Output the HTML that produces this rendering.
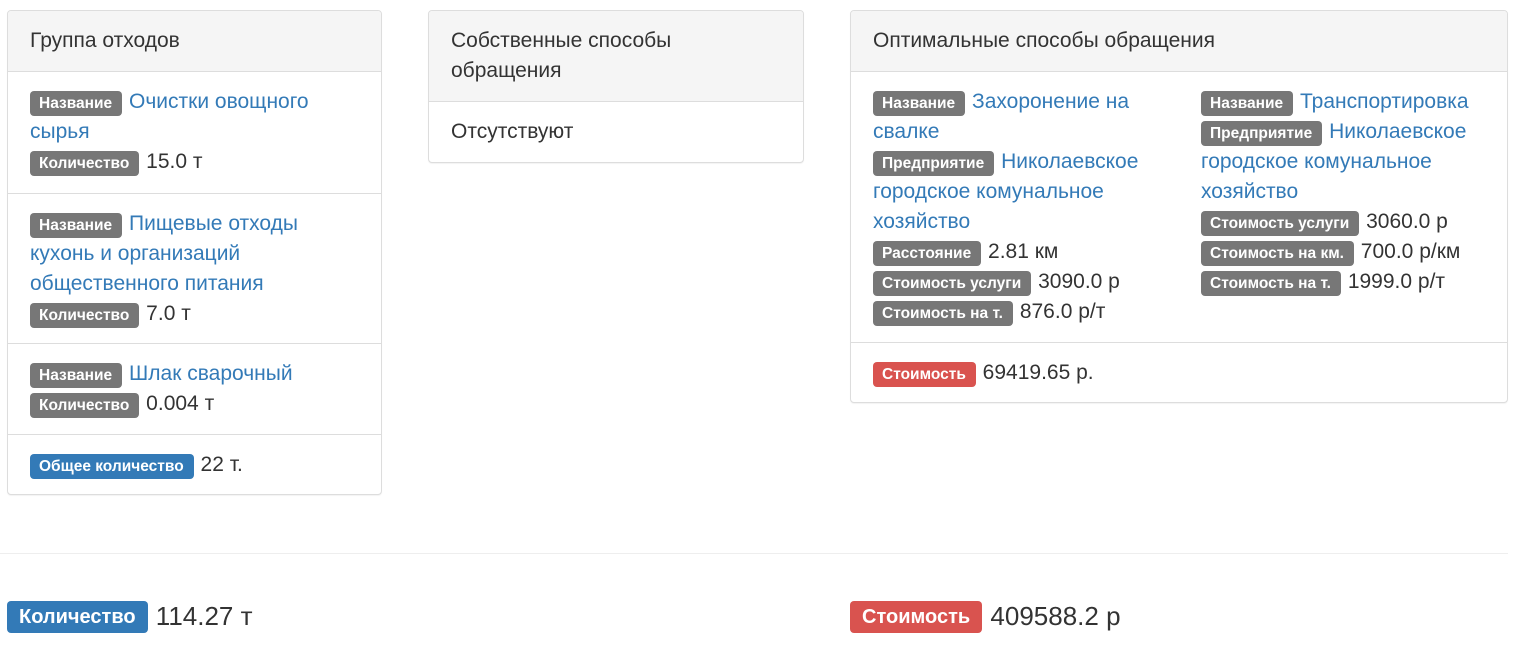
<!DOCTYPE html>
<html><head><meta charset="utf-8"><style>
*{box-sizing:border-box}
body{margin:0;width:1517px;height:646px;background:#fff;font-family:"Liberation Sans",Arial,sans-serif;font-size:21px;line-height:30px;color:#333;position:relative;overflow:hidden}
.panel{position:absolute;top:10px;border:1px solid #ddd;border-radius:4px;background:#fff;box-shadow:0 1px 1px rgba(0,0,0,.05)}
.hd{background:#f5f5f5;border-bottom:1px solid #ddd;padding:15px 22px;border-radius:3px 3px 0 0;height:61px}
.hd.two{height:91px}
.it{padding:15px 22px}
.it+.it{border-top:1px solid #ddd}
a{color:#337ab7;text-decoration:none}
.lb{display:inline-block;background:#777;color:#fff;font-weight:bold;font-size:15.5px;line-height:17px;padding:4px 10px 4px 9px;border-radius:4px;vertical-align:0;margin-right:1px}
.red{background:#d9534f}.blue{background:#337ab7}
.cols{display:flex}
</style></head><body>
<div class="panel" style="left:7px;width:375px">
<div class="hd">Группа отходов</div>
<div class="it" style="height:121px"><span class="lb">Название</span> <a>Очистки овощного сырья</a><br><span class="lb">Количество</span> 15.0 т</div>
<div class="it" style="height:150px"><span class="lb">Название</span> <a>Пищевые отходы кухонь и организаций общественного питания</a><br><span class="lb">Количество</span> 7.0 т</div>
<div class="it" style="height:91px"><span class="lb">Название</span> <a>Шлак сварочный</a><br><span class="lb">Количество</span> 0.004 т</div>
<div class="it" style="height:60px"><span class="lb blue">Общее количество</span> 22 т.</div>
</div>
<div class="panel" style="left:428px;width:376px">
<div class="hd two">Собственные способы обращения</div>
<div class="it">Отсутствуют</div>
</div>
<div class="panel" style="left:850px;width:658px">
<div class="hd">Оптимальные способы обращения</div>
<div class="it cols" style="height:270px"><div style="width:328px;flex:none;padding-right:30px"><span class="lb">Название</span> <a>Захоронение на свалке</a><br><span class="lb">Предприятие</span> <a>Николаевское городское комунальное хозяйство</a><br><span class="lb">Расстояние</span> 2.81 км<br><span class="lb">Стоимость услуги</span> 3090.0 р<br><span class="lb">Стоимость на т.</span> 876.0 р/т</div>
<div style="width:285px;flex:none"><span class="lb">Название</span> <a>Транспортировка</a><br><span class="lb">Предприятие</span> <a>Николаевское городское комунальное хозяйство</a><br><span class="lb">Стоимость услуги</span> 3060.0 р<br><span class="lb">Стоимость на км.</span> 700.0 р/км<br><span class="lb">Стоимость на т.</span> 1999.0 р/т</div></div>
<div class="it" style="height:60px"><span class="lb red">Стоимость</span> 69419.65 р.</div>
</div>
<div style="position:absolute;left:0;top:553px;width:1508px;border-top:1px solid #eee"></div>
<div style="position:absolute;left:7px;top:599px;font-size:26px;line-height:34px"><span class="lb blue" style="font-size:20px;line-height:22px;padding:5px 12px;vertical-align:2px">Количество</span> 114.27 т</div>
<div style="position:absolute;left:850px;top:599px;font-size:26px;line-height:34px"><span class="lb red" style="font-size:20px;line-height:22px;padding:5px 12px;vertical-align:2px">Стоимость</span> 409588.2 р</div>
</body></html>
